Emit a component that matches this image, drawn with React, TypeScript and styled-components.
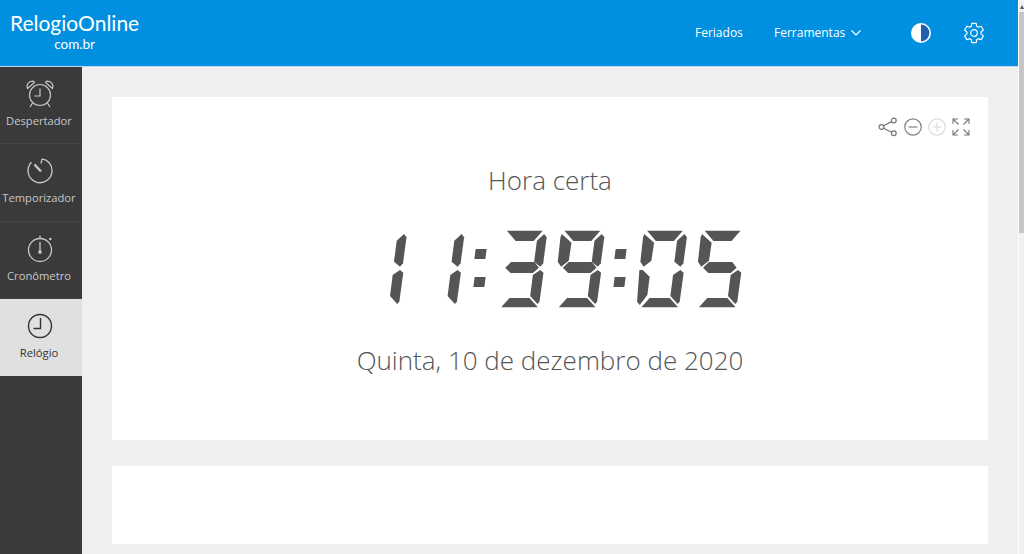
import styled, { createGlobalStyle } from 'styled-components';

const GlobalStyle = createGlobalStyle`
  html, body {
    margin: 0;
    padding: 0;
    height: 100%;
    overflow: hidden;
    background: #efefef;
    font-family: 'Open Sans', 'Liberation Sans', sans-serif;
  }
`;

// segment outlines of the clock display, in px inside one digit cell
const SEGMENTS: Record<string, string> = {
  a: '10.7px 5.7px, 46.5px 5.7px, 37.5px 16px, 19.5px 16px',
  b: '48px 9px, 50.5px 12.3px, 47px 38.3px, 44px 41.7px, 38px 36.7px, 40.7px 15.7px',
  c: '44px 45px, 47.3px 47.7px, 43.3px 76.7px, 41.3px 79px, 34px 71px, 36.7px 50px',
  d: '5px 82.3px, 13.3px 73px, 33.3px 73px, 41.7px 82.3px',
  e: '3px 45px, 6.3px 45px, 13.3px 51.7px, 11px 70px, 3.3px 80px, 0.7px 76.7px',
  f: '8px 9px, 17.7px 17.7px, 15px 35.7px, 7.3px 41.7px, 4px 36.7px, 6.7px 12.3px',
  g: '9px 42.7px, 15px 37px, 38.3px 37px, 42.7px 42.7px, 36.7px 48px, 14.3px 48px',
};

const DIGIT_SEGMENTS: Record<string, string> = {
  '0': 'abcdef',
  '1': 'bc',
  '3': 'abcdg',
  '5': 'acdfg',
  '9': 'abcdfg',
};

const NAV_ITEMS = [
  { label: 'Despertador', icon: <AlarmIcon /> },
  { label: 'Temporizador', icon: <TimerIcon /> },
  { label: 'Cronômetro', icon: <StopwatchIcon /> },
  { label: 'Relógio', icon: <ClockIcon />, active: true },
];

function AlarmIcon() {
  return (
    <svg width="30" height="30" viewBox="0 0 30 30" fill="none" stroke="currentColor" strokeWidth="1.2">
      <circle cx="15" cy="16" r="10.5" />
      <path d="M15 9.5V17H9.5" />
      <path d="M2.5 9.5C1 6 3.5 2 8 2.2L9.5 3.5 2.5 9.5Z" />
      <path d="M27.5 9.5C29 6 26.5 2 22 2.2L20.5 3.5 27.5 9.5Z" />
      <path d="M7.5 24L5 28M22.5 24L25 28" />
    </svg>
  );
}

function TimerIcon() {
  return (
    <svg width="30" height="30" viewBox="0 0 30 30" fill="none" stroke="currentColor" strokeWidth="1.3">
      <path d="M17 2.8C22.8 3.6 27 8.6 27 14.5A12 12 0 1 1 6.4 6.3" />
      <path d="M17 2.8L16 7.5" />
      <path d="M9.5 8.5L16 15.5" strokeWidth="2.4" />
    </svg>
  );
}

function StopwatchIcon() {
  return (
    <svg width="30" height="30" viewBox="0 0 30 30" fill="none" stroke="currentColor" strokeWidth="1.3">
      <circle cx="15" cy="16" r="11.5" />
      <path d="M15 1.5V4.5M15 8V18" />
      <circle cx="15" cy="18" r="1.2" fill="currentColor" />
      <circle cx="25.3" cy="5" r="1.3" fill="currentColor" stroke="none" />
    </svg>
  );
}

function ClockIcon() {
  return (
    <svg width="30" height="30" viewBox="0 0 30 30" fill="none" stroke="currentColor" strokeWidth="1.4">
      <circle cx="15" cy="15" r="11.5" />
      <path d="M15.5 7V17.5H8.5" />
    </svg>
  );
}

function ContrastIcon() {
  return (
    <svg width="22" height="22" viewBox="0 0 22 22">
      <circle cx="11" cy="11" r="10" fill="#fff" />
      <path d="M11 2.6A8.4 8.4 0 0 1 11 19.4Z" fill="#1f5fb0" />
    </svg>
  );
}

function GearIcon() {
  return (
    <svg width="22" height="22" viewBox="0 0 24 24" fill="none" stroke="#fff" strokeWidth="1.3" strokeLinejoin="round">
      <path d="M9.6 1.5h4.8l.6 3.2 1.7 1 3.1-1.1 2.4 4.2-2.5 2.1v2.1l2.5 2.1-2.4 4.2-3.1-1.1-1.7 1-.6 3.2H9.6L9 19.2l-1.7-1-3.1 1.1-2.4-4.2 2.5-2.1v-2.1L1.8 8.8l2.4-4.2 3.1 1.1 1.7-1z" />
      <circle cx="12" cy="12" r="3.6" />
    </svg>
  );
}

function ShareIcon() {
  return (
    <svg width="20" height="20" viewBox="0 0 20 20" fill="none" stroke="#777" strokeWidth="1.2">
      <circle cx="3.5" cy="10" r="2.4" />
      <circle cx="15.8" cy="3.5" r="2.4" />
      <circle cx="15.8" cy="16.3" r="2.4" />
      <path d="M5.6 8.8L13.7 4.6M5.6 11.2L13.7 15.2" />
    </svg>
  );
}

function ZoomOutIcon({ muted }: { muted?: boolean }) {
  return (
    <svg width="18" height="18" viewBox="0 0 18 18" fill="none" stroke={muted ? '#dcdcdc' : '#808080'} strokeWidth="1.2">
      <circle cx="9" cy="9" r="8.2" />
      <path d="M4.5 9H13.5" />
      {muted && <path d="M9 4.5V13.5" />}
    </svg>
  );
}

function FullscreenIcon() {
  return (
    <svg width="18" height="18" viewBox="0 0 18 18" fill="none" stroke="#777" strokeWidth="1.1">
      <path d="M1 6V1H6M1 1L6.5 6.5" />
      <path d="M17 6V1H12M17 1L11.5 6.5" />
      <path d="M1 12V17H6M1 17L6.5 11.5" />
      <path d="M17 12V17H12M17 17L11.5 11.5" />
    </svg>
  );
}

function Digit({ value }: { value: string }) {
  return (
    <DigitCell aria-hidden="true">
      {DIGIT_SEGMENTS[value].split('').map((name) => (
        <Segment key={name} $points={SEGMENTS[name]} />
      ))}
    </DigitCell>
  );
}

function Colon() {
  return (
    <ColonCell aria-hidden="true">
      <ColonDot />
      <ColonDot />
    </ColonCell>
  );
}

function App() {
  const time = '11:39:05';

  return (
    <Shell>
      <GlobalStyle />
      <Page>
        <Header>
          <Logo>
            <LogoName>RelogioOnline</LogoName>
            <LogoDomain>com.br</LogoDomain>
          </Logo>
          <HeaderNav>
            <NavLink $width={79}>Feriados</NavLink>
            <NavLink $width={136}>
              Ferramentas
              <svg width="10" height="6" viewBox="0 0 10 6" fill="none" stroke="#fff" strokeWidth="1.2">
                <path d="M0.5 0.5L5 5L9.5 0.5" />
              </svg>
            </NavLink>
            <HeaderIcon>
              <ContrastIcon />
            </HeaderIcon>
            <HeaderIcon>
              <GearIcon />
            </HeaderIcon>
          </HeaderNav>
        </Header>
        <Body>
          <Sidebar>
            {NAV_ITEMS.map((item) => (
              <SideItem key={item.label} $active={item.active}>
                {item.icon}
                <SideLabel>{item.label}</SideLabel>
              </SideItem>
            ))}
          </Sidebar>
          <Main>
            <ClockCard>
              <Toolbar>
                <ShareIcon />
                <ZoomOutIcon />
                <ZoomOutIcon muted />
                <FullscreenIcon />
              </Toolbar>
              <ClockTitle>Hora certa</ClockTitle>
              <Display role="timer">
                <TimeText>{time}</TimeText>
                <Digit value="1" />
                <Digit value="1" />
                <Colon />
                <Digit value="3" />
                <Digit value="9" />
                <Colon />
                <Digit value="0" />
                <Digit value="5" />
              </Display>
              <ClockDate>Quinta, 10 de dezembro de 2020</ClockDate>
            </ClockCard>
            <AdCard />
          </Main>
        </Body>
      </Page>
      <Scrollbar>
        <ScrollArrow />
        <ScrollThumb />
      </Scrollbar>
    </Shell>
  );
}

const Shell = styled.div`
  display: flex;
  width: 1024px;
  height: 554px;
  overflow: hidden;
`;

const Page = styled.div`
  flex: 1;
  min-width: 0;
  display: flex;
  flex-direction: column;
`;

/* Header */

const Header = styled.header`
  flex: none;
  display: flex;
  align-items: flex-start;
  justify-content: space-between;
  height: 66px;
  background: #0090df;
  border-bottom: 1px solid #b9dcf2;
`;

const Logo = styled.div`
  display: flex;
  flex-direction: column;
  padding: 9px 0 0 10px;
  color: #fff;
`;

const LogoName = styled.div`
  font-family: 'Lato', 'Liberation Sans', sans-serif;
  font-size: 21px;
  line-height: 28px;
`;

const LogoDomain = styled.div`
  align-self: center;
  font-family: 'Lato', 'Liberation Sans', sans-serif;
  font-size: 13.5px;
  line-height: 15px;
`;

const HeaderNav = styled.nav`
  display: flex;
  align-items: center;
  height: 66px;
  padding-right: 33px;
`;

const NavLink = styled.a<{ $width: number }>`
  display: flex;
  align-items: center;
  gap: 6px;
  width: ${({ $width }) => $width}px;
  padding-bottom: 1px;
  color: #fff;
  font-size: 12px;
`;

const HeaderIcon = styled.span`
  display: flex;
  width: 22px;
  height: 22px;
  margin-left: 31px;

  &:first-of-type {
    margin-left: 0;
  }
`;

/* Sidebar */

const Body = styled.div`
  flex: 1;
  min-height: 0;
  display: flex;
`;

const Sidebar = styled.aside`
  flex: none;
  width: 82px;
  background: #3a3a3a;
`;

const SideItem = styled.a<{ $active?: boolean }>`
  display: flex;
  flex-direction: column;
  align-items: center;
  box-sizing: border-box;
  height: 77.33px;
  padding-top: 12px;
  color: ${({ $active }) => ($active ? '#333' : '#c8c8c8')};
  background: ${({ $active }) => ($active ? '#e0e0e0' : 'transparent')};
  border-bottom: 1px solid ${({ $active }) => ($active ? '#e0e0e0' : '#444')};

  svg {
    flex: none;
    margin-right: 3px;
  }
`;

const SideLabel = styled.span`
  margin-top: 4px;
  margin-right: 4px;
  font-size: 11.2px;
  line-height: 16px;
  white-space: nowrap;
`;

/* Main */

const Main = styled.main`
  flex: 1;
  min-width: 0;
  display: flex;
  flex-direction: column;
  gap: 26px;
  padding: 30px 30px 0;
  background: #efefef;
`;

const ClockCard = styled.section`
  position: relative;
  height: 343px;
  display: flex;
  flex-direction: column;
  align-items: center;
  background: #fff;
`;

const AdCard = styled.div`
  height: 78px;
  background: #fff;
`;

const Toolbar = styled.div`
  position: absolute;
  top: 20px;
  right: 18px;
  display: flex;
  align-items: center;
  gap: 6px;
`;

const ClockTitle = styled.h1`
  margin: 65px 0 0;
  color: #555;
  font-size: 26px;
  font-weight: 300;
  line-height: 36px;
`;

const Display = styled.div`
  position: relative;
  display: flex;
  width: 388px;
  margin-top: 27px;
`;

/* the real time string, sits under the lit segments */
const TimeText = styled.span`
  position: absolute;
  top: 0;
  left: 0;
  color: transparent;
  font-size: 76px;
  letter-spacing: 8px;
  line-height: 90px;
  white-space: nowrap;
`;

const DigitCell = styled.span`
  position: relative;
  flex: none;
  width: 57.6px;
  height: 90px;
`;

const Segment = styled.i<{ $points: string }>`
  position: absolute;
  inset: 0;
  background: #555;
  clip-path: polygon(${({ $points }) => $points});
`;

const ColonCell = styled.span`
  flex: none;
  display: flex;
  flex-direction: column;
  gap: 18px;
  width: 25px;
  height: 90px;
  box-sizing: border-box;
  padding-top: 24px;
`;

const ColonDot = styled.span`
  display: block;
  width: 11px;
  height: 10px;
  margin-left: 4px;
  background: #555;
  transform: skewX(-7deg);

  &:last-child {
    margin-left: 2.7px;
  }
`;

const ClockDate = styled.div`
  margin-top: 27px;
  color: #555;
  font-size: 26px;
  font-weight: 300;
  line-height: 36px;
`;

/* Window scrollbar */

const Scrollbar = styled.div`
  flex: none;
  display: flex;
  flex-direction: column;
  align-items: flex-end;
  width: 6px;
  background: #f1f1f1;
  border-left: 1px solid #fff;
  box-sizing: border-box;
`;

const ScrollArrow = styled.div`
  width: 0;
  height: 0;
  margin: 5px 0 3px;
  border-left: 2.5px solid transparent;
  border-right: 2.5px solid transparent;
  border-bottom: 4px solid #555;
`;

const ScrollThumb = styled.div`
  width: 5px;
  height: 221px;
  background: #c6c6c6;
`;

export default App;
